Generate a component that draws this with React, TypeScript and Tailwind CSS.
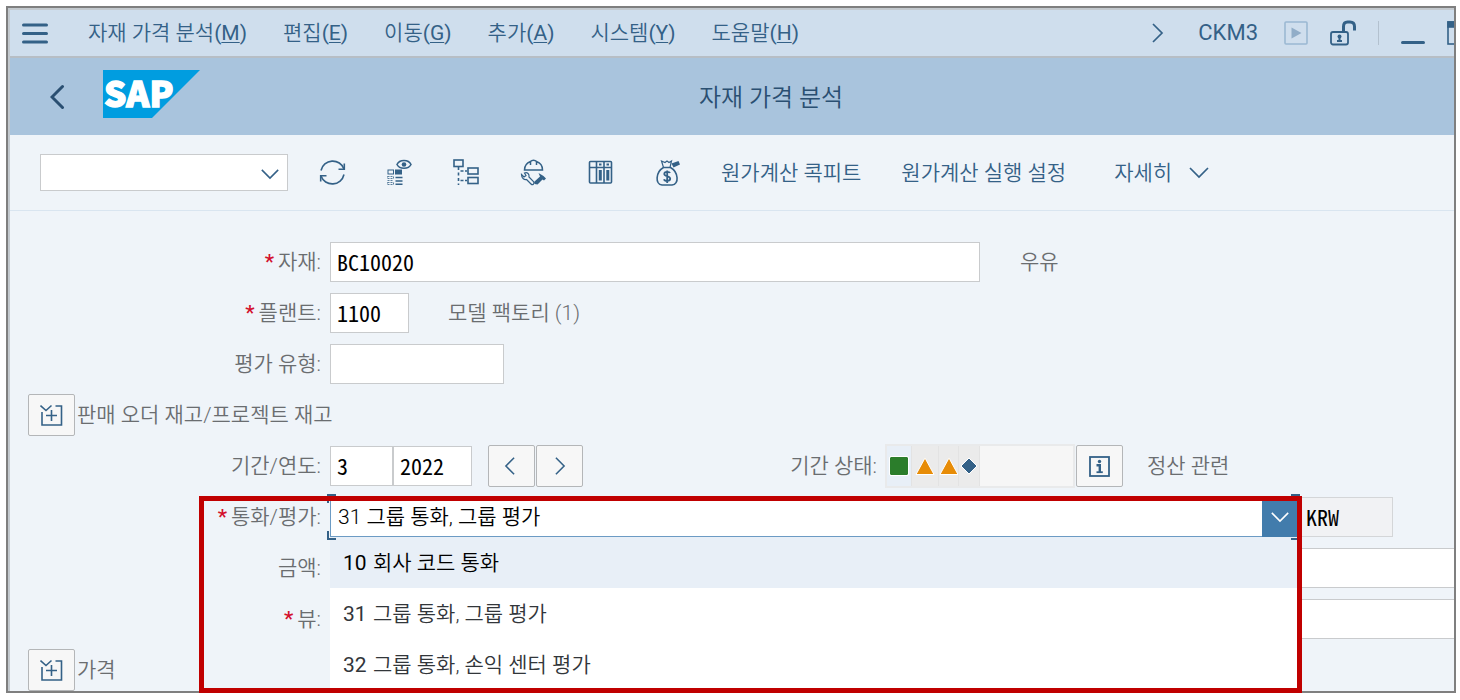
import { useState } from "react";
import type { ReactNode } from "react";

const MENU: [string, string][] = [
  ["자재 가격 분석", "M"],
  ["편집", "E"],
  ["이동", "G"],
  ["추가", "A"],
  ["시스템", "Y"],
  ["도움말", "H"],
];

const VALUATIONS: [string, string][] = [
  ["10", "회사 코드 통화"],
  ["31", "그룹 통화, 그룹 평가"],
  ["32", "그룹 통화, 손익 센터 평가"],
];

const FIELD =
  "h-10 min-w-0 rounded-none border border-[#c9cbcd] bg-white px-[6px] pb-[3px] font-['Noto_Sans_Mono_CJK_KR','Liberation_Mono',monospace] text-[22px] font-normal text-black outline-none";

const SQUARE_BUTTON =
  "flex h-[42px] w-[47px] shrink-0 items-center justify-center rounded-[2px] border border-[#b4b6b8] bg-[#f7f7f7] text-[#346187]";

function Chevron({ dir, className }: { dir: "down" | "left" | "right"; className: string }) {
  const d = { down: "M2 2 L11 11 L20 2", left: "M11 2 L2 11 L11 20", right: "M2 2 L11 11 L2 20" }[dir];
  return (
    <svg className={className} viewBox={dir === "down" ? "0 0 22 13" : "0 0 13 22"} fill="none" stroke="currentColor" strokeWidth="1.700" aria-hidden="true">
      <path d={d} />
    </svg>
  );
}

function Icon({ children }: { children: ReactNode }) {
  return (
    <svg className="h-[27px] w-[27px]" viewBox="0 0 27 27" fill="none" stroke="currentColor" strokeWidth="1.6" aria-hidden="true">
      {children}
    </svg>
  );
}

const TOOLS: { name: string; icon: ReactNode }[] = [
  {
    name: "새로고침",
    icon: (
      <Icon>
        <path d="M2 11.5 A12 12 0 0 1 25 10 M25 15.5 A12 12 0 0 1 2 17" />
        <path d="M25.3 4.5 V10.3 H19.5 M1.7 22.5 V16.7 H7.5" />
      </Icon>
    ),
  },
  {
    name: "레이아웃 표시",
    icon: (
      <Icon>
        <path d="M11 5.5 C13.5 0.2 22.500 0.2 25 5.500 C22.500 10.500 13.500 10.500 11 5.500 Z" />
        <circle cx="18" cy="5.500" r="2.300" fill="currentColor" stroke="none" />
        <rect x="2" y="11" width="5.500" height="4" strokeWidth="1" />
        <rect x="9" y="10.500" width="7" height="5" fill="currentColor" stroke="none" />
        <path d="M9.500 18.500 H16.500 M9.500 22 H16.500 M9.500 25.300 H16.500" strokeWidth="1.500" />
        <path d="M1.500 17.500 H7.500 V19.500 H1.500 Z M1.500 21.500 H7.500 M1.500 23.500 H7.500 V25.500 H1.500 Z" strokeWidth="0.800" strokeDasharray="2 1" />
      </Icon>
    ),
  },
  {
    name: "계층 구조",
    icon: (
      <Icon>
        <rect x="1" y="1" width="9" height="6.500" />
        <rect x="15" y="9" width="10" height="6" />
        <rect x="15" y="18.500" width="10" height="6" />
        <path d="M5.500 8 V26" strokeDasharray="3 2.500" />
        <path d="M7.500 12 H14 M7.500 21.500 H14" strokeDasharray="3 1.500" />
      </Icon>
    ),
  },
  {
    name: "작업 도구",
    icon: (
      <Icon>
        <path d="M4.500 11 C4.500 6 8 3.500 10.500 2.500 C12 0.800 15 0.800 16.500 2.500 C19.500 3.500 22.500 6 22.500 11 Z M10.500 3 V6 M16.500 3 V6" strokeWidth="1.500" />
        <path d="M1.500 15.500 L4 18 L6 16.500 L4.500 14 C7.500 13 9.500 15 9 18 L13.500 22.500 C15 25 12.500 26.500 11 25 L6.500 20.500 C4 21 1.500 19 1.500 15.500 Z" strokeWidth="1.200" />
        <path d="M18.500 14 L21 15.500 L23.500 17 L26 19.500 L24 21.500 L22.500 20.500 L17.500 25.500 L14.500 25 L14 23 L20 17.500 Z" fill="currentColor" stroke="none" />
      </Icon>
    ),
  },
  {
    name: "보관 파일",
    icon: (
      <Icon>
        <rect x="2.500" y="2.500" width="22" height="21.500" rx="1" />
        <path d="M2.500 8.500 H24.500 M9.500 2.500 V24 M17 2.500 V24" />
        <rect x="12" y="4.500" width="2.500" height="2" fill="currentColor" stroke="none" />
        <rect x="19.500" y="4.500" width="2.500" height="2" fill="currentColor" stroke="none" />
        <path d="M13.300 11 V21.500 M20.800 11 V21.500" strokeWidth="3" />
      </Icon>
    ),
  },
  {
    name: "원가",
    icon: (
      <Icon>
        <path d="M9.500 8.500 C1.500 13 1 25.500 8 26 H18 C25.500 25.500 24.500 13 16.500 8.500 Z" />
        <path d="M9.500 8.500 L7.500 2 L11 3.500 L13 2 L15 3.500 L17.500 2 L16 8.500" strokeWidth="1.200" />
        <path d="M17.500 4.500 L24.500 2 L26 5.500 L19.500 8.500 Z" fill="currentColor" stroke="none" />
        <path d="M16 14 C15.500 12.500 10.300 12 10.300 15 C10.300 18 16.200 16.500 16.200 19.700 C16.200 22.500 10.500 22.300 10 20.200 M13.200 11.500 V24" strokeWidth="1.800" />
      </Icon>
    ),
  },
];

function ExpandButton({ label }: { label: string }) {
  return (
    <button type="button" aria-label={label + " 펼치기"} className={SQUARE_BUTTON}>
      <svg className="h-6 w-6" viewBox="0 0 24 24" fill="none" stroke="currentColor" strokeWidth="1.600" aria-hidden="true">
        <path d="M2 9 V22 H21.500 V3 H15.500 M0.500 2.500 L6 7.500 L11.500 2.500 M11.500 7 V18 M6 12.500 H17" />
      </svg>
    </button>
  );
}

function FieldLabel({ text, htmlFor, required }: { text: string; htmlFor: string; required?: boolean }) {
  return (
    <label htmlFor={htmlFor} className="mr-[9px] w-[311px] shrink-0 text-right">
      {required && <span className="mr-1 font-medium text-[#d3112d]">*</span>}
      {text}:
    </label>
  );
}

function Triangle() {
  return (
    <svg className="h-5 w-5 shrink-0" viewBox="0 0 20 20" aria-hidden="true">
      <path d="M10 2 L19 18.500 H1 Z" fill="#e78c07" stroke="#fff" strokeWidth="1" />
    </svg>
  );
}

export default function App() {
  const [valuation, setValuation] = useState("31");
  return (
    <div className="bg-white pt-[6px] pr-1 pb-[7px] pl-[6px] font-[Roboto,'Noto_Sans_CJK_KR',sans-serif] text-[21px] leading-7 font-[350] text-[#6a6d70]">
      <div className="border-2 border-[#7f7f7f]">
        <div className="border-t-2 border-l-2 border-[#c3c9ce] bg-[#eff4f9]">
          <header>
            <div className="flex h-12 items-center overflow-hidden border-b-2 border-[#b7bec5] bg-[#cfdeed] pl-3 text-[#346187]">
              <button type="button" aria-label="메뉴" className="shrink-0">
                <svg className="h-[21px] w-[26px]" viewBox="0 0 26 21" stroke="currentColor" strokeWidth="3" strokeLinecap="round" aria-hidden="true">
                  <path d="M1.500 2 H24.500 M1.500 10.500 H24.500 M1.500 19 H24.500" />
                </svg>
              </button>
              <nav className="ml-10 flex gap-[36px] whitespace-nowrap">
                {MENU.map(([text, key]) => (
                  <button type="button" key={key}>
                    {text}
                    <span className="font-normal">
                      (<span className="underline decoration-1 underline-offset-2">{key}</span>)
                    </span>
                  </button>
                ))}
              </nav>
              <div className="-mr-[17px] ml-auto flex items-center gap-[22px]">
                <button type="button" aria-label="다음" className="mr-3">
                  <Chevron dir="right" className="h-[22px] w-[13px]" />
                </button>
                <span className="mr-1 text-[22px] font-normal">CKM3</span>
                <button type="button" aria-label="실행" className="text-[#9bb8d2]">
                  <svg className="h-6 w-6" viewBox="0 0 24 24" aria-hidden="true">
                    <rect x="1" y="1" width="22" height="22" rx="1" fill="none" stroke="currentColor" strokeWidth="1.600" />
                    <path d="M7.500 6.500 L17.500 12 L7.500 17.500 Z" fill="#91adc8" />
                  </svg>
                </button>
                <button type="button" aria-label="잠금 해제">
                  <svg className="h-[26px] w-[26px]" viewBox="0 0 26 26" fill="none" stroke="currentColor" aria-hidden="true">
                    <rect x="1" y="12" width="17" height="12.500" rx="2" strokeWidth="1.800" />
                    <path d="M13.500 11 V6.500 C13.500 3 15 2 17.500 2 H20 C23 2 24.500 3.500 24.500 6.500 V10.500" strokeWidth="3" />
                    <circle cx="9.500" cy="16.500" r="2" fill="currentColor" stroke="none" />
                    <path d="M9.500 17 V20 M7 21 H12" strokeWidth="2" />
                  </svg>
                </button>
                <span className="h-6 w-px bg-[#b3c1cf]" />
                <button type="button" aria-label="최소화">
                  <svg className="h-6 w-6" viewBox="0 0 24 24" aria-hidden="true">
                    <rect y="20" width="24" height="3" rx="1.500" fill="currentColor" />
                  </svg>
                </button>
                <button type="button" aria-label="최대화">
                  <svg className="h-6 w-6" viewBox="0 0 24 24" fill="none" stroke="currentColor" strokeWidth="1.600" aria-hidden="true">
                    <rect x="1" y="1" width="22" height="22" />
                    <rect x="1" y="1" width="22" height="5" fill="currentColor" />
                  </svg>
                </button>
              </div>
            </div>

            <div className="flex h-[77px] items-center bg-[#a9c4dd] pr-28 pl-10 text-[#2a4f71]">
              <button type="button" aria-label="뒤로" className="mr-[37px] shrink-0">
                <svg className="h-[26px] w-4" viewBox="0 0 16 26" fill="none" stroke="currentColor" strokeWidth="3" strokeLinecap="round" aria-hidden="true">
                  <path d="M12.500 2.500 L2 13 L12.500 23.500" />
                </svg>
              </button>
              <svg className="mb-[5px] h-12 w-[97px] shrink-0 overflow-visible" viewBox="0 0 97 48" role="img" aria-label="SAP">
                <path d="M0 0 H97 L49 48 H0 Z" fill="#009de0" />
                <text x="1" y="37" fill="#fff" stroke="#fff" strokeWidth="1.400" className="font-['Noto_Sans_CJK_KR',sans-serif] text-[35px] font-black">
                  SAP
                </text>
              </svg>
              <h1 className="flex-1 pt-0.5 text-center text-[24px]">자재 가격 분석</h1>
            </div>
          </header>

          <div className="flex h-[76px] items-center border-b border-[#d9e5f0] pl-[30px] whitespace-nowrap text-[#346187]">
            <div className="relative mr-[31px] shrink-0">
              <select aria-label="명령" className="block h-[37px] w-[248px] appearance-none border border-[#c9cbcd] bg-white px-2 outline-none">
                <option></option>
              </select>
              <Chevron dir="down" className="pointer-events-none absolute top-[14px] right-2 h-3 w-5" />
            </div>
            <div className="flex items-center gap-10">
              {TOOLS.map((t) => (
                <button type="button" key={t.name} aria-label={t.name}>
                  {t.icon}
                </button>
              ))}
              <button type="button">원가계산 콕피트</button>
              <button type="button">원가계산 실행 설정</button>
              <button type="button" className="ml-2 flex items-center gap-4">
                자세히
                <Chevron dir="down" className="h-[13px] w-[22px]" />
              </button>
            </div>
          </div>

          <form className="flex flex-col gap-[9px] pt-[30px] whitespace-nowrap">
            <div className="flex h-[42px] items-center">
              <FieldLabel text="자재" htmlFor="material" required />
              <input id="material" defaultValue="BC10020" className={FIELD + " w-[650px]"} />
              <span className="ml-10">우유</span>
            </div>
            <div className="flex h-[42px] items-center">
              <FieldLabel text="플랜트" htmlFor="plant" required />
              <input id="plant" defaultValue="1100" className={FIELD + " w-[79px]"} />
              <span className="ml-[39px]">모델 팩토리 (1)</span>
            </div>
            <div className="flex h-[42px] items-center">
              <FieldLabel text="평가 유형" htmlFor="valtype" />
              <input id="valtype" className={FIELD + " w-[174px]"} />
            </div>
            <div className="flex h-[42px] items-center gap-[2px] pl-[18px]">
              <ExpandButton label="판매 오더 재고/프로젝트 재고" />
              <span>판매 오더 재고/프로젝트 재고</span>
            </div>
            <div className="flex h-[42px] items-center">
              <FieldLabel text="기간/연도" htmlFor="period" />
              <input id="period" defaultValue="3" className={FIELD + " w-[63px]"} />
              <input aria-label="연도" defaultValue="2022" className={FIELD + " w-[79px]"} />
              <div className="ml-4 flex gap-px">
                <button type="button" aria-label="이전 기간" className={SQUARE_BUTTON}>
                  <Chevron dir="left" className="mr-1 h-5 w-3" />
                </button>
                <button type="button" aria-label="다음 기간" className={SQUARE_BUTTON}>
                  <Chevron dir="right" className="h-5 w-3" />
                </button>
              </div>
              <span className="mr-2 w-[294px] shrink-0 text-right">기간 상태:</span>
              <div className="flex h-11 w-[190px] border-2 border-[#e9eaeb] bg-[#f6f6f6]">
                <span className="flex w-6 items-center justify-center bg-[#e8eff7]">
                  <span className="h-[18px] w-[18px] rounded-[1px] bg-[#2b7d2b] outline outline-white" />
                </span>
                <span className="flex w-[27px] items-center justify-center border-l border-[#e3e3e3] bg-[#ebebeb]">
                  <Triangle />
                </span>
                <span className="flex w-5 items-center justify-center border-l border-[#e3e3e3] bg-[#ebebeb]">
                  <Triangle />
                </span>
                <span className="flex w-[22px] items-center justify-center border-x border-[#e3e3e3] bg-[#ebebeb]">
                  <svg className="h-[18px] w-[18px]" viewBox="0 0 18 18" aria-hidden="true">
                    <path d="M9 1 L17 9 L9 17 L1 9 Z" fill="#346187" stroke="#fff" />
                  </svg>
                </span>
              </div>
              <button type="button" aria-label="정보" className={SQUARE_BUTTON + " ml-px"}>
                <svg className="h-[21px] w-[21px]" viewBox="0 0 21 21" fill="none" stroke="currentColor" aria-hidden="true">
                  <rect x="1" y="1" width="19" height="19" strokeWidth="1.800" />
                  <circle cx="10.500" cy="5.500" r="1.700" fill="currentColor" stroke="none" />
                  <path d="M7.500 9.200 H10.800 V16" strokeWidth="2.400" />
                  <path d="M7.500 16.200 H13.800" strokeWidth="1.800" />
                </svg>
              </button>
              <span className="ml-6">정산 관련</span>
            </div>
            <div className="relative flex h-[42px] items-center pr-[61px]">
              <FieldLabel text="통화/평가" htmlFor="valuation" required />
              <div className="relative flex-1">
                <select
                  id="valuation"
                  value={valuation}
                  onChange={(e) => setValuation(e.target.value)}
                  className="block h-10 w-full appearance-none border border-[#6c9bc4] bg-white px-[7px] text-black outline-none"
                >
                  {VALUATIONS.map(([code, text]) => (
                    <option key={code} value={code}>
                      {code} {text}
                    </option>
                  ))}
                </select>
                <span className="pointer-events-none absolute inset-y-0 right-0 flex w-[35px] items-center justify-center bg-[#427cac] text-white">
                  <Chevron dir="down" className="h-3 w-5" />
                </span>
                <span className="pointer-events-none absolute -top-[3px] -left-[3px] h-[9px] w-[9px] border-t-2 border-l-2 border-[#346187]" />
                <span className="pointer-events-none absolute -top-[3px] -right-[3px] h-[9px] w-[9px] border-t-2 border-r-2 border-[#346187]" />
                <ul role="listbox" aria-label="통화/평가" className="absolute top-full right-0 left-0 z-10 bg-white text-[#32363a]">
                  {VALUATIONS.map(([code, text]) => (
                    <li
                      key={code}
                      role="option"
                      aria-selected={code === valuation}
                      onClick={() => setValuation(code)}
                      className="flex h-[51px] items-center px-[13px] first:bg-[#e8eff7] first:text-black"
                    >
                      <span className="w-[30px] font-normal">{code}</span>
                      {text}
                    </li>
                  ))}
                </ul>
                <span className="pointer-events-none absolute -bottom-[3px] -left-[3px] z-10 h-[9px] w-[9px] border-b-2 border-l-2 border-[#346187]" />
                <span className="pointer-events-none absolute -right-[3px] -bottom-[3px] z-10 h-[9px] w-[9px] border-r-2 border-b-2 border-[#346187]" />
              </div>
              <input aria-label="통화" readOnly defaultValue="KRW" className="ml-px h-10 w-[95px] border border-[#d4d6d8] bg-[#f1f2f4] px-[7px] pb-[3px] font-['Noto_Sans_Mono_CJK_KR','Liberation_Mono',monospace] text-[22px] font-normal text-black outline-none" />
              <div className="pointer-events-none absolute top-0 right-[152px] left-[189px] z-20 h-[197px] border-[5px] border-[#c00000]" />
            </div>
            <div className="flex h-[42px] items-center">
              <FieldLabel text="금액" htmlFor="amount" />
              <input id="amount" className={FIELD + " flex-1 border-r-0"} />
            </div>
            <div className="flex h-[42px] items-center">
              <FieldLabel text="뷰" htmlFor="view" required />
              <input id="view" className={FIELD + " flex-1 border-r-0"} />
            </div>
            <div className="flex h-[42px] items-center gap-[2px] pl-[18px]">
              <ExpandButton label="가격" />
              <span>가격</span>
            </div>
          </form>
        </div>
      </div>
    </div>
  );
}
